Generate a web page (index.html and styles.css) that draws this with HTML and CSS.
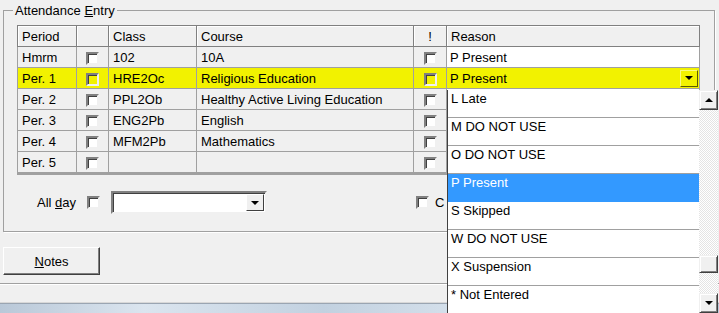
FILE: index.html
```html
<!DOCTYPE html>
<html>
<head>
<meta name="viewport" content="width=device-width, initial-scale=1">
<link rel="stylesheet" href="styles.css">
</head>
<body>
<div class="window">
  <fieldset class="group">
    <legend>Attendance <u>E</u>ntry</legend>
    <div class="grid-wrap">
      <table class="grid">
        <tr>
          <th class="c-period">Period</th>
          <th class="c-check"></th>
          <th class="c-class">Class</th>
          <th class="c-course">Course</th>
          <th class="c-flag">!</th>
          <th class="c-reason">Reason</th>
        </tr>
        <tr>
          <td>Hmrm</td><td class="mid"><span class="cb"></span></td><td>102</td><td>10A</td>
          <td class="mid"><span class="cb"></span></td><td class="white">P Present</td>
        </tr>
        <tr class="current">
          <td>Per. 1</td><td class="mid"><span class="cb"></span></td><td>HRE2Oc</td><td>Religious Education</td>
          <td class="mid"><span class="cb"></span></td>
          <td class="reason"><div class="combo"><span>P Present</span><span class="arrow-btn"><span class="tri-down"></span></span></div></td>
        </tr>
        <tr>
          <td>Per. 2</td><td class="mid"><span class="cb"></span></td><td>PPL2Ob</td><td>Healthy Active Living Education</td>
          <td class="mid"><span class="cb"></span></td><td class="white"></td>
        </tr>
        <tr>
          <td>Per. 3</td><td class="mid"><span class="cb"></span></td><td>ENG2Pb</td><td>English</td>
          <td class="mid"><span class="cb"></span></td><td class="white"></td>
        </tr>
        <tr>
          <td>Per. 4</td><td class="mid"><span class="cb"></span></td><td>MFM2Pb</td><td>Mathematics</td>
          <td class="mid"><span class="cb"></span></td><td class="white"></td>
        </tr>
        <tr>
          <td>Per. 5</td><td class="mid"><span class="cb"></span></td><td></td><td></td>
          <td class="mid"><span class="cb"></span></td><td class="white"></td>
        </tr>
      </table>
    </div>

    <div class="allday">
      <span class="label">All <u>d</u>ay</span>
      <span class="cb"></span>
      <div class="select"><span class="arrow-btn"><span class="tri-down"></span></span></div>
      <span class="cb cb-right"></span>
      <span class="label short">C</span>
    </div>
  </fieldset>

  <div class="actions">
    <button class="btn"><u>N</u>otes</button>
  </div>

  <div class="status"></div>
  <div class="frame"></div>

  <!-- open reason dropdown -->
  <div class="droplist">
    <div class="items">
      <div class="item">L Late</div>
      <div class="item">M DO NOT USE</div>
      <div class="item">O DO NOT USE</div>
      <div class="item selected">P Present</div>
      <div class="item">S Skipped</div>
      <div class="item">W DO NOT USE</div>
      <div class="item">X Suspension</div>
      <div class="item">* Not Entered</div>
    </div>
    <div class="scroll">
      <div class="sb-btn"><span class="tri-up"></span></div>
      <div class="track">
        <div class="thumb"></div>
      </div>
      <div class="sb-btn"><span class="tri-down"></span></div>
    </div>
  </div>
</div>
</body>
</html>
```

FILE: styles.css
```css
html, body {
  margin: 0;
  height: 313px;
  overflow: hidden;
}

body {
  background: #f0f0f0;
  font-family: "Liberation Sans", Arial, sans-serif;
  font-size: 13px;
  color: #000;
}

.window {
  position: relative;
  height: 313px;
  padding-top: 3px;
  box-sizing: border-box;
}

.group {
  margin: 0 4px 0 3px;
  padding: 0 0 17px 0;
  border: 1px solid #a0a0a0;
  box-shadow: 1px 1px 0 #fff;
}

.group legend {
  margin-left: 9px;
  padding: 0 2px;
  line-height: 15px;
}

.grid-wrap {
  margin: 7px 0 0 13px;
  width: 682px;
  border-bottom: 2px solid #a0a0a0;
}

.grid {
  border-collapse: collapse;
  table-layout: fixed;
  width: 682px;
  border: 1px solid #808080;
}

.grid th,
.grid td {
  box-sizing: border-box;
}

.grid th {
  font-weight: normal;
  text-align: left;
  height: 21px;
  padding: 0 4px;
  background: #f0f0f0;
  border: 1px solid #808080;
  box-shadow: inset 1px 1px 0 #fff;
}

.grid th.c-flag {
  text-align: center;
}

.c-period { width: 59px; }
.c-check { width: 32px; }
.c-class { width: 88px; }
.c-course { width: 217px; }
.c-flag { width: 33px; }
.c-reason { width: 253px; }

.grid td {
  height: 21px;
  padding: 0 4px;
  border: 1px solid #a0a0a0;
  white-space: nowrap;
  overflow: hidden;
}

.grid td.mid {
  text-align: center;
  padding: 0;
}

.grid td.white {
  background: #fff;
  padding-left: 3px;
}

.grid td.reason {
  padding: 0 1px 0 3px;
}

.grid tr.current td {
  background: #f2f200;
}

.combo {
  display: flex;
  align-items: center;
  justify-content: space-between;
}

.cb {
  display: inline-block;
  width: 9px;
  height: 9px;
  vertical-align: middle;
  background: #fff;
  border: 2px solid;
  border-color: #808080 #f0f0f0 #f0f0f0 #808080;
  box-shadow: inset 1px 1px 0 #404040;
}

.current .cb {
  background: #f2f200;
}

.arrow-btn {
  display: flex;
  align-items: center;
  justify-content: center;
  width: 16px;
  height: 15px;
  border: 1px solid;
  border-color: #fff #404040 #404040 #fff;
  background: #f0f0f0;
}

.current .arrow-btn {
  background: #f2f200;
  border-color: #fafa80 #5a5a00 #5a5a00 #fafa80;
}

.tri-down {
  width: 0;
  height: 0;
  border-left: 4px solid transparent;
  border-right: 4px solid transparent;
  border-top: 4px solid #000;
}

.tri-up {
  width: 0;
  height: 0;
  border-left: 4px solid transparent;
  border-right: 4px solid transparent;
  border-bottom: 4px solid #000;
}

.allday {
  display: flex;
  align-items: center;
  margin-top: 16px;
  padding-left: 33px;
}

.allday .label {
  margin-right: 11px;
}

.allday .cb {
  margin-right: 11px;
}

.allday .short {
  margin-right: 0;
}

.select {
  display: flex;
  justify-content: flex-end;
  align-items: center;
  width: 150px;
  height: 17px;
  padding: 1px;
  background: #fff;
  border: 2px solid;
  border-color: #808080 #f0f0f0 #f0f0f0 #808080;
  box-shadow: inset 1px 1px 0 #404040;
}

.allday .cb-right {
  margin-left: 149px;
  margin-right: 6px;
}

.actions {
  margin: 15px 0 0 3px;
}

.btn {
  display: block;
  width: 97px;
  height: 28px;
  padding: 0;
  font-family: inherit;
  font-size: 13px;
  background: #f0f0f0;
  border: 1px solid;
  border-color: #fff #404040 #404040 #fff;
  box-shadow: inset -1px -1px 0 #808080;
  border-radius: 0;
}

.status {
  margin-top: 8px;
  height: 18px;
  border-top: 1px solid #a0a0a0;
  border-bottom: 1px solid #d8d8d8;
  box-shadow: inset 0 1px 0 #fff;
}

.frame {
  height: 10px;
  border-top: 1px solid #9aa5b2;
  background: linear-gradient(90deg, #b9c8d8, #dbe5ef 20%, #c2d1e0 45%, #dbe5ef 70%, #bccbdb);
  border-bottom: 1px solid #404040;
}

.droplist {
  position: absolute;
  left: 447px;
  top: 90px;
  width: 270px;
  height: 223px;
  display: flex;
  background: #fff;
  border-left: 1px solid #404040;
}

.items {
  flex: 1;
  overflow: hidden;
}

.item {
  box-sizing: border-box;
  height: 28px;
  padding: 1px 0 0 3px;
  line-height: 15px;
  border-bottom: 1px solid #a0a0a0;
}

.item.selected {
  background: #3399ff;
  color: #fff;
  border-bottom-color: #3399ff;
}

.scroll {
  width: 19px;
  display: flex;
  flex-direction: column;
}

.sb-btn {
  box-sizing: border-box;
  height: 20px;
  display: flex;
  align-items: center;
  justify-content: center;
  background: #f0f0f0;
  border: 1px solid;
  border-color: #f0f0f0 #404040 #404040 #f0f0f0;
  box-shadow: inset 1px 1px 0 #fff, inset -1px -1px 0 #808080;
}

.track {
  flex: 1;
  position: relative;
  background: repeating-conic-gradient(#e4e4e4 0 25%, #fff 0 50%) 0 0 / 2px 2px;
}

.thumb {
  position: absolute;
  left: 0;
  right: 0;
  top: 145px;
  height: 18px;
  box-sizing: border-box;
  background: #f0f0f0;
  border: 1px solid;
  border-color: #f0f0f0 #404040 #404040 #f0f0f0;
  box-shadow: inset 1px 1px 0 #fff, inset -1px -1px 0 #808080;
}
```
